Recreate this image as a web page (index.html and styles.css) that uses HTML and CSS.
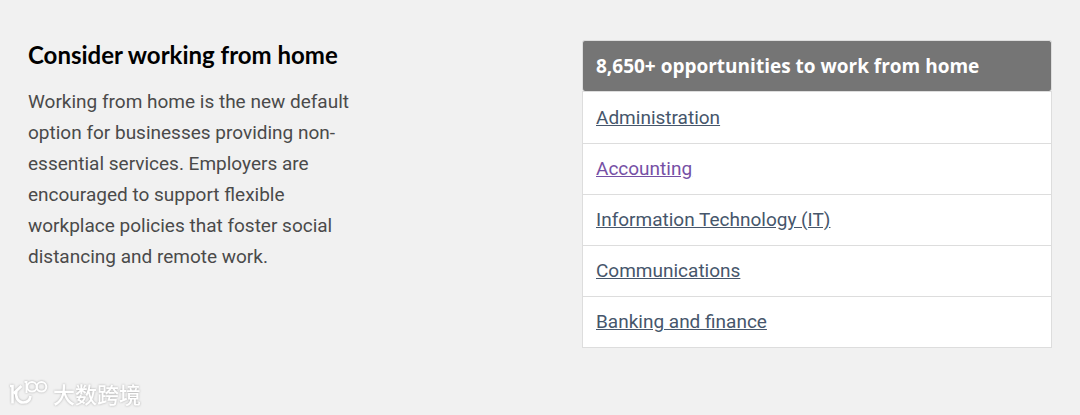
FILE: index.html
```html
<!DOCTYPE html>
<html lang="en">
<head>
<meta charset="utf-8">
<meta name="viewport" content="width=device-width, initial-scale=1">
<title>Consider working from home</title>
<link rel="stylesheet" href="styles.css">
</head>
<body>
<main class="page">
  <section class="intro">
    <h2 class="intro-title">Consider working from home</h2>
    <p class="intro-text">Working from home is the new default option for businesses providing non-essential services. Employers are encouraged to support flexible workplace policies that foster social distancing and remote work.</p>
  </section>
  <nav class="panel" aria-labelledby="panel-title">
    <h3 class="panel-title" id="panel-title">8,650+ opportunities to work from home</h3>
    <ul class="panel-list">
      <li class="panel-item"><a class="link" href="#administration">Administration</a></li>
      <li class="panel-item"><a class="link link-visited" href="#accounting">Accounting</a></li>
      <li class="panel-item"><a class="link" href="#it">Information Technology (IT)</a></li>
      <li class="panel-item"><a class="link" href="#communications">Communications</a></li>
      <li class="panel-item"><a class="link" href="#banking">Banking and finance</a></li>
    </ul>
  </nav>
</main>
<footer class="watermark">
  <svg class="watermark-logo" viewBox="0 0 40 28" aria-hidden="true">
    <g fill="none" stroke="#fff" stroke-width="2.6">
      <path d="M1 7h2.500V24.500"/>
      <path d="M12.500 7L4.500 14.500M7.500 12C6 18 9 23.500 14 23.500c4.500 0 7-2.500 7.500-6.500"/>
      <path stroke-width="2" d="M15.500 3h2v11"/>
      <g stroke-width="2"><circle cx="23" cy="7.800" r="4.800"/><circle cx="32.500" cy="7.800" r="4.800"/></g>
    </g>
  </svg>
  <span class="watermark-text" lang="zh">大数跨境</span>
</footer>
</body>
</html>
```
FILE: styles.css
```css
* { box-sizing: border-box; }
body {
  display: flex;
  flex-direction: column;
  min-height: 100vh;
  margin: 0;
  background: #f1f1f1;
  color: #4a4a4a;
  font-family: Roboto, sans-serif;
  font-size: 19px;
}
.page {
  display: grid;
  grid-template-columns: 1fr 1fr;
  gap: 84px;
  align-items: start;
  padding: 40px 28px 0;
}
.intro { max-width: 330px; }
.intro-title {
  margin: 0 0 16px;
  color: #000;
  font: 700 24px/30px Lato, sans-serif;
}
.intro-text { margin: 0; line-height: 31px; }
.panel-title {
  margin: 0;
  padding: 0 13px;
  background: #757575;
  color: #fff;
  border: 1px solid #ddd;
  border-bottom: 0;
  border-radius: 3px;
  font: 700 19px/50px "Open Sans", sans-serif;
}
.panel-list {
  margin: 0;
  padding: 1px 0 0;
  list-style: none;
  background: #fff;
  border: 1px solid #ddd;
}
.panel-item { padding: 0 13px; line-height: 50px; }
.panel-item + .panel-item { border-top: 1px solid #ddd; }
.link { color: #46566b; text-decoration: underline; }
.link-visited { color: #7650a5; }
.watermark {
  display: flex;
  align-items: center;
  gap: 4px;
  margin-top: auto;
  padding: 0 9px 7px;
  color: #fff;
  filter: drop-shadow(0 0 1px #aaa);
}
.watermark-logo { width: 40px; height: 28px; }
.watermark-text { font: 500 22px/30px "Noto Sans CJK SC", sans-serif; }
```
